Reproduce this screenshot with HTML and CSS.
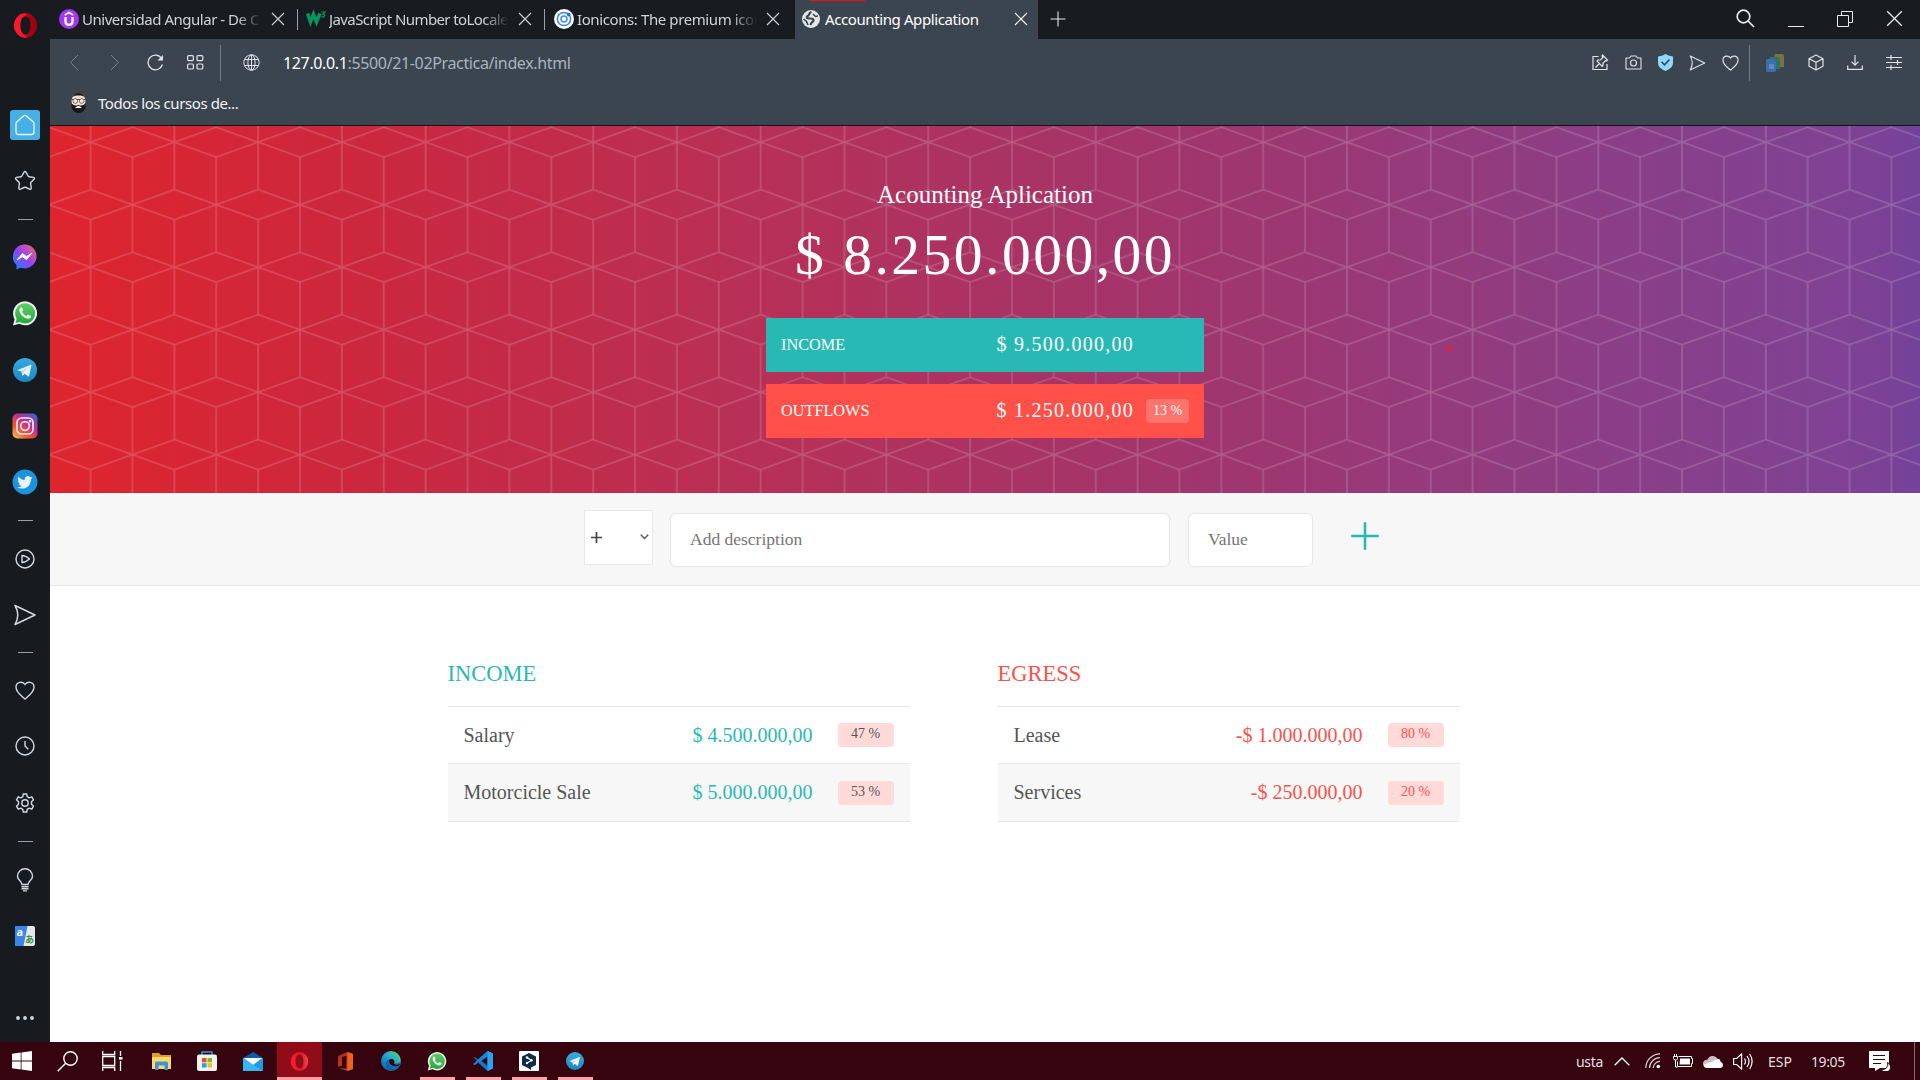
FILE: index.html
```html
<!DOCTYPE html>
<html lang="en">
<head>
<meta charset="utf-8">
<title>Accounting Application</title>
<link rel="stylesheet" href="styles.css">
</head>
<body>
<svg width="0" height="0" class="defs">
  <defs>
    <linearGradient id="gMsg" x1="0" y1="1" x2="1" y2="0"><stop offset="0" stop-color="#0a8bff"/><stop offset=".5" stop-color="#9740f5"/><stop offset="1" stop-color="#ff6a5e"/></linearGradient>
    <linearGradient id="gWa" x1="0" y1="0" x2="0" y2="1"><stop offset="0" stop-color="#5fce66"/><stop offset="1" stop-color="#25a83a"/></linearGradient>
    <linearGradient id="gTg" x1="0" y1="0" x2="0" y2="1"><stop offset="0" stop-color="#38aadf"/><stop offset="1" stop-color="#1e86c2"/></linearGradient>
    <linearGradient id="gIg" x1="0" y1="1" x2=".8" y2="0"><stop offset="0" stop-color="#fdc95c"/><stop offset=".35" stop-color="#f0562f"/><stop offset=".65" stop-color="#c32e92"/><stop offset="1" stop-color="#5059c9"/></linearGradient>
    <linearGradient id="gOp" x1="0" y1="0" x2="1" y2="0"><stop offset="0" stop-color="#ff1b2d"/><stop offset=".45" stop-color="#f5142a"/><stop offset=".6" stop-color="#b0000f"/><stop offset="1" stop-color="#9c0010"/></linearGradient>
    <linearGradient id="gOpTask" x1="0" y1="0" x2="1" y2="0"><stop offset="0" stop-color="#fb1c2e"/><stop offset=".6" stop-color="#e01828"/><stop offset="1" stop-color="#f04450"/></linearGradient>
    <linearGradient id="gEd" x1="0" y1="1" x2="1" y2="0"><stop offset="0" stop-color="#0c59a4"/><stop offset=".5" stop-color="#1ea0dc"/><stop offset="1" stop-color="#5fe05a"/></linearGradient>
    <linearGradient id="gOf" x1="0" y1="0" x2="1" y2="1"><stop offset="0" stop-color="#a32a1c"/><stop offset="1" stop-color="#d8483c"/></linearGradient>
    <symbol id="whatsapp" viewBox="0 0 26 26"><path d="M1 25.500l1.600-6.300A12 12 0 1 1 7.200 23.800z" fill="#f0f0f0"/><path d="M3.500 23l1.200-4.300A10 10 0 1 1 8 21.900z" fill="url(#gWa)"/><path d="M9.300 7.200c-.5 0-2 .8-2 2.800 0 4 5.200 8.800 8.800 8.800 2 0 3-1.400 3-2.600 0-.5-2.800-2-3.200-1.800l-1.300 1.500c-1.900-.7-3.600-2.300-4.500-4.200l1.100-1.400c.2-.4-.9-3.100-1.900-3.100z" fill="#f0f0f0"/></symbol>
    <symbol id="telegram" viewBox="0 0 24 24"><circle cx="12" cy="12" r="12" fill="url(#gTg)"/><path d="M4.800 12l12.900-5.200c.5-.1.800.1.700.8l-2.200 10.200c-.2.700-.6.800-1.200.5l-3.300-2.500-1.700 1.600c-.5.400-.7.200-.8-.3l-.7-3.600-3.600-1.100c-.3-.1-.4-.3-.1-.4z" fill="#e9f3fa"/><path d="M8.800 13.200l7-4.500-5.600 5.300-.2 3z" fill="#b6d3e6"/></symbol>
    <symbol id="opera" viewBox="0 0 26 26"><path fill-rule="evenodd" d="M13 0a12 13 0 1 0 .01 26 12 13 0 1 0-.01-26zM13 3.500c3.400 0 5.300 4.500 5.300 9.500s-1.900 9.500-5.300 9.500-5.300-4.500-5.300-9.500 1.900-9.500 5.300-9.500z"/></symbol>
    <symbol id="close" viewBox="0 0 14 14"><path d="M1 1l12 12M13 1L1 13" fill="none" stroke="currentColor" stroke-width="1.100"/></symbol>
    <symbol id="heart" viewBox="0 0 20 19"><path d="M10 3.500C8 .2 1 .2 1 6.300c0 5 5.500 8.700 9 11.700 3.500-3 9-6.700 9-11.700 0-6.100-7-6.100-9-2.800z" fill="none" stroke="currentColor" stroke-width="1.400"/></symbol>
    <symbol id="send" viewBox="0 0 22 22"><path d="M1 1.500L21 11 1 20.500C4.800 14 4.800 8 1 1.500z" fill="none" stroke="currentColor" stroke-width="1.500" stroke-linejoin="round"/></symbol>
  </defs>
</svg>

<div class="screen">
  <div class="workspace">
    <aside class="sidebar">
      <div class="slot slot-logo"><svg width="25" height="25" fill="url(#gOp)"><use href="#opera"/></svg></div>
      <div class="slot slot-home"><span class="home"><svg width="20" height="22" viewBox="0 0 20 22"><path d="M1 9.500Q1 8.500 2 7.700L8.500 2q1.500-1.200 3 0L18 7.700q1 .8 1 1.800V18q0 2.500-2.500 2.500h-13Q1 20.500 1 18z" fill="none" stroke="#eef8ff" stroke-width="1.300"/></svg></span></div>
      <div class="slot"><svg width="22" height="22" viewBox="0 0 22 22"><path d="M9.900 2.300q1.100-1.600 2.200 0l2 3.700q.3.600 1 .7l4.300.7q1.800.5.600 1.900l-3 3q-.5.500-.4 1.200l.6 4.500q0 1.900-1.700 1.200L12 17.500q-1-.4-2 0l-3.500 1.700q-1.700.7-1.700-1.200l.6-4.500q.1-.7-.4-1.200l-3-3Q.8 7.900 2.600 7.400l4.300-.7q.7-.1 1-.7z" fill="none" stroke="currentColor" stroke-width="1.400"/></svg></div>
      <div class="rule rule-a"></div>
      <div class="slot"><svg width="25" height="26" viewBox="0 0 25 26"><path d="M12.500.5a12 12 0 1 1-4 23.300L4.500 25.500V21A12 12 0 0 1 12.500.5z" fill="url(#gMsg)"/><path d="M5 16l5.500-6.500 4 3L20 9l-5.500 6.700-4-3z" fill="#fff" stroke="#fff" stroke-width=".8"/></svg></div>
      <div class="slot"><svg width="26" height="26"><use href="#whatsapp"/></svg></div>
      <div class="slot"><svg width="24" height="24"><use href="#telegram"/></svg></div>
      <div class="slot"><svg width="26" height="26" viewBox="0 0 26 26"><rect x=".5" y=".5" width="25" height="25" rx="5" fill="url(#gIg)"/><rect x="5" y="5" width="16" height="16" rx="4.500" fill="none" stroke="#f5e9ee" stroke-width="1.700"/><circle cx="13" cy="13" r="4.300" fill="none" stroke="#f5e9ee" stroke-width="1.700"/><circle cx="18" cy="8.300" r="1.200" fill="#fff"/></svg></div>
      <div class="slot"><svg width="26" height="26" viewBox="0 0 26 26"><circle cx="13" cy="13" r="12.500" fill="#1b93dd"/><path d="M20.500 8.600c-.6.300-1.200.4-1.800.5.700-.4 1.100-1 1.400-1.700-.6.400-1.300.6-2 .8a3.150 3.150 0 0 0-5.400 2.900c-2.600-.1-4.900-1.400-6.500-3.300-.8 1.500-.4 3.200 1 4.200-.5 0-1-.2-1.400-.4 0 1.500 1.100 2.800 2.500 3.100-.5.100-1 .1-1.400 0 .4 1.300 1.500 2.200 2.900 2.200A6.300 6.300 0 0 1 5.200 18.200c5.600 3.400 13.700.7 13.700-8 .6-.4 1.200-1 1.600-1.600z" fill="#e9f2f8"/></svg></div>
      <div class="rule rule-b"></div>
      <div class="slot"><svg width="20" height="20" viewBox="0 0 20 20" fill="none" stroke="currentColor" stroke-width="1.400"><circle cx="10" cy="10" r="9"/><path d="M7 6.500v7q3.500 0 7.500-3.500Q10.500 6.500 7 6.500z" stroke-linejoin="round"/></svg></div>
      <div class="slot"><svg width="22" height="22"><use href="#send"/></svg></div>
      <div class="rule rule-c"></div>
      <div class="slot"><svg width="20" height="19"><use href="#heart"/></svg></div>
      <div class="slot"><svg width="20" height="20" viewBox="0 0 20 20" fill="none" stroke="currentColor" stroke-width="1.400"><circle cx="10" cy="10" r="9"/><path d="M10 5v5l3.200 3.300"/></svg></div>
      <div class="slot"><svg width="20" height="20" viewBox="0 0 20 20" fill="none" stroke="currentColor" stroke-width="1.400" stroke-linejoin="round"><path d="M8.300 1h3.400l.5 2.700 2 1.100 2.600-1 1.700 3L16.500 8.700v2.600l2 1.900-1.700 3-2.600-1-2 1.100-.5 2.700H8.300l-.5-2.700-2-1.100-2.600 1-1.700-3 2-1.900V8.700l-2-1.900 1.700-3 2.600 1 2-1.100z"/><circle cx="10" cy="10" r="3.200"/></svg></div>
      <div class="rule rule-d"></div>
      <div class="slot"><svg width="18" height="24" viewBox="0 0 18 24" fill="none" stroke="currentColor" stroke-width="1.400"><path d="M6 16.500C6 13 1.500 12.500 1.500 8.300a7.500 7.500 0 0 1 15 0C16.500 12.500 12 13 12 16.500zM5.500 18.700h7M5.500 20.800h7M7 22.900h4"/></svg></div>
      <div class="slot"><svg class="translate" width="20" height="20" viewBox="0 0 20 20"><rect width="20" height="20" rx="2" fill="#e6e7e9"/><path d="M2 0h10.500L8.500 20H2q-2 0-2-2V2Q0 0 2 0z" fill="#3985ea"/><text x="1.500" y="10" class="glyph-a">a</text><text x="10" y="17" class="glyph-ja">あ</text></svg></div>
      <div class="slot slot-more"><svg width="18" height="4" viewBox="0 0 18 4" fill="currentColor"><circle cx="2" cy="2" r="1.900"/><circle cx="9" cy="2" r="1.900"/><circle cx="16" cy="2" r="1.900"/></svg></div>
    </aside>

    <div class="browser">
      <div class="tabs">
        <div class="tab tab-1">
          <svg width="20" height="20" viewBox="0 0 20 20"><circle cx="10" cy="10" r="10" fill="#a435f0"/><path d="M6.500 8v4.500q0 3.300 3.500 3.300t3.500-3.300V8" fill="none" stroke="#fff" stroke-width="2.300"/><path d="M5.700 6L10 3.500 14.300 6" fill="none" stroke="#fff" stroke-width="1.700"/></svg>
          <span class="tab-text t1">Universidad Angular - De C</span>
          <svg class="tab-close" width="14" height="14"><use href="#close"/></svg>
        </div>
        <div class="tab tab-2">
          <svg width="20" height="20" viewBox="0 0 20 20"><path d="M1.500 4.500L4.500 13 7.500 5l3 8L14 4.500" fill="none" stroke="#059862" stroke-width="3.400"/><path d="M15.500 3h3.500l-2 2.200c3.300.2 1.800 4-1.700 2.300" fill="none" stroke="#059862" stroke-width="1.200"/></svg>
          <span class="tab-text t2">JavaScript Number toLocale</span>
          <svg class="tab-close" width="14" height="14"><use href="#close"/></svg>
        </div>
        <div class="tab tab-3">
          <svg width="20" height="20" viewBox="0 0 20 20"><circle cx="10" cy="10" r="10" fill="#fff"/><circle cx="10" cy="10" r="6.600" fill="none" stroke="#3880ff" stroke-width="1.500"/><circle cx="10" cy="10" r="3" fill="none" stroke="#3f8bff" stroke-width="1.500"/><circle cx="14.700" cy="5.600" r="1.800" fill="#2663e8"/></svg>
          <span class="tab-text t3">Ionicons: The premium icon</span>
          <svg class="tab-close" width="14" height="14"><use href="#close"/></svg>
        </div>
        <div class="tab tab-active">
          <svg width="18" height="18" viewBox="0 0 18 18"><circle cx="9" cy="9" r="9" fill="#e3e7ea"/><path d="M9.500 2C6 3 8.500 5 5 6.500c-1 2 2 2 3.500 2s3 .5 3 2-2.500 1.500-3 4.500" fill="none" stroke="#3a4550" stroke-width="2.200"/><path d="M11 4l2.500 2.500 2.500-.5M1.500 9l3 2.500L6 15" fill="none" stroke="#3a4550" stroke-width="1.600"/></svg>
          <span class="tab-text t4">Accounting Application</span>
          <svg class="tab-close" width="14" height="14"><use href="#close"/></svg>
        </div>
        <svg class="new-tab" width="16" height="16" viewBox="0 0 16 16"><path d="M8 .5v15M.5 8h15" stroke="#e8eaec" stroke-width="1.100"/></svg>
        <div class="window-tools">
          <svg width="19" height="19" viewBox="0 0 19 19" fill="none" stroke="currentColor" stroke-width="1.700"><circle cx="7.500" cy="7.500" r="6.300"/><path d="M12 12l6 6"/></svg>
          <svg width="16" height="16" viewBox="0 0 16 16"><path d="M0 15.500h16" stroke="currentColor"/></svg>
          <svg width="16" height="16" viewBox="0 0 16 16" fill="none" stroke="currentColor"><path d="M.5 4.500h11v11H.5zM4.500 4.500v-4h11v11h-4"/></svg>
          <svg width="17" height="17"><use href="#close"/></svg>
        </div>
      </div>

      <div class="toolbar">
        <svg class="dim" width="10" height="17" viewBox="0 0 10 17"><path d="M9 1L1.500 8.500 9 16" fill="none" stroke="currentColor"/></svg>
        <svg class="dim fwd" width="10" height="17" viewBox="0 0 10 17"><path d="M1 1l7.500 7.500L1 16" fill="none" stroke="currentColor"/></svg>
        <svg class="reload" width="17" height="17" viewBox="0 0 17 17"><path d="M15.400 10.500A7.300 7.300 0 1 1 14.500 4.500" fill="none" stroke="currentColor" stroke-width="1.300"/><path d="M16 1v5.500h-5.500z" fill="currentColor"/></svg>
        <svg class="speed" width="17" height="15" viewBox="0 0 17 15" fill="none" stroke="currentColor" stroke-width="1.200"><rect x=".6" y=".6" width="5.800" height="5" rx="1"/><rect x="10" y=".6" width="5.800" height="5" rx="1"/><rect x=".6" y="9" width="5.800" height="5" rx="1"/><rect x="10" y="9" width="5.800" height="5" rx="1"/></svg>
        <span class="divider"></span>
        <svg class="globe" width="17" height="17" viewBox="0 0 17 17" fill="none" stroke="currentColor"><circle cx="8.500" cy="8.500" r="7.700"/><ellipse cx="8.500" cy="8.500" rx="3.600" ry="7.700"/><path d="M1.500 5.500h14M1.500 11.500h14M8.500 1v15"/></svg>
        <span class="url"><b>127.0.0.1</b>:5500/21-02Practica/index.html</span>
        <div class="actions">
          <svg width="17" height="17" viewBox="0 0 17 17" fill="none" stroke="currentColor" stroke-width="1.200"><path d="M6.500 2.500H1v13h14V10M3.500 13.500l4-4M10.500 1l5 5-1 1-1-.3L11 9v2.500l-.8.800L5 7l1-1h2.500L11 3.500l-1-1.300z"/></svg>
          <svg width="17" height="15" viewBox="0 0 17 15" fill="none" stroke="currentColor" stroke-width="1.100"><path d="M1 3h3.500L6 1h5l1.500 2H16v11H1z" stroke-linejoin="round"/><circle cx="8.500" cy="8" r="3"/></svg>
          <svg width="15" height="17" viewBox="0 0 15 17"><path d="M7.500 0Q11 2.300 15 2.500v6c0 4.500-3 6.500-7.500 8.500C3 15 0 13 0 8.500v-6Q4 2.300 7.500 0z" fill="#8fd8fd"/><path d="M3.500 7.800l3 3L11.500 5.500" fill="none" stroke="#2f4554" stroke-width="1.600"/></svg>
          <svg width="17" height="16"><use href="#send"/></svg>
          <svg width="17" height="16"><use href="#heart"/></svg>
          <span class="divider"></span>
          <svg width="19" height="18" viewBox="0 0 19 18"><path d="M9 0h7q2 0 2 2v11h-5V5H8z" fill="#7d7041"/><path d="M4 3h7q3 0 3 3v9H9V8H4z" fill="#2b7660"/><rect y="5" width="10" height="13" rx="1.500" fill="#3f6cab"/><rect x="3" y="10" width="5" height="5" fill="#5b8cc9"/></svg>
          <svg width="16" height="17" viewBox="0 0 16 17" fill="none" stroke="currentColor" stroke-width="1.200"><path d="M8 1l7 3.700v7.600L8 16l-7-3.700V4.700zM1 4.700l7 3.600 7-3.600M8 8.300V16" stroke-linejoin="round"/></svg>
          <svg width="16" height="15" viewBox="0 0 16 15" fill="none" stroke="currentColor" stroke-width="1.200"><path d="M.7 10.500v3.800h14.600v-3.800M8 0v10M4.500 6.700L8 10.200l3.500-3.500"/></svg>
          <svg width="17" height="15" viewBox="0 0 17 15" fill="none" stroke="currentColor" stroke-width="1.200"><path d="M0 2.500h16M0 7.500h16M0 12.500h16M5 0v5M11.500 5v5M5 10v5"/></svg>
        </div>
      </div>
      <div class="bookmarks">
        <svg width="17" height="20" viewBox="0 0 17 20"><path d="M2 12q0 8 6.500 8t6.500-8z" fill="#141414"/><ellipse cx="8.500" cy="8" rx="7" ry="7.500" fill="#f3dccb"/><path d="M3 3.500Q5 0 8.500 0T14 3.500L11 2.500H6z" fill="#191919"/><path d="M1 6.500h15" stroke="#50545c"/><circle cx="5.300" cy="8" r="2.300" fill="#f7ece4" stroke="#444" stroke-width=".7"/><circle cx="11.700" cy="8" r="2.300" fill="#f7ece4" stroke="#444" stroke-width=".7"/><path d="M1.500 10.500q3 3 7 1.500 4 1.500 7-1.500v4.500q-3 4-7 4t-7-4z" fill="#191919"/><path d="M5 15q3.500-4 7 0z" fill="#fff"/></svg>
        <span>Todos los cursos de...</span>
      </div>

      <main class="page">
        <section class="hero">
          <svg class="hero-pattern" width="1870" height="367">
            <defs>
              <pattern id="cubes" width="83.760" height="125" patternUnits="userSpaceOnUse" patternTransform="translate(40.600 16.200)">
                <path d="M0 0V47.500M0 77.500V125M83.760 0V47.500M83.760 77.500V125M41.880 15V110M0 0L41.880 15 83.760 0M0 125L41.880 110 83.760 125M0 47.500L41.880 62.500 0 77.500M83.760 47.500L41.880 62.500 83.760 77.500" fill="none" stroke="#fff" stroke-width="1.500" stroke-opacity=".18"/>
              </pattern>
            </defs>
            <rect width="1870" height="367" fill="url(#cubes)"/>
            <circle cx="1399" cy="222.500" r="2.500" fill="#e91f26"/>
          </svg>
          <div class="budget">
            <h1 class="budget-title">Acounting Aplication</h1>
            <div class="budget-value">$ 8.250.000,00</div>
            <div class="total total-income"><span class="total-label">INCOME</span><span class="total-value">$ 9.500.000,00</span><span class="total-pct"></span></div>
            <div class="total total-out"><span class="total-label">OUTFLOWS</span><span class="total-value">$ 1.250.000,00</span><span class="total-pct filled">13 %</span></div>
          </div>
        </section>

        <form class="entry">
          <div class="kind"><svg width="11" height="11" viewBox="0 0 11 11"><path d="M5.500 0v11M0 5.500h11" stroke="#444" stroke-width="1.700"/></svg><svg width="9" height="6" viewBox="0 0 9 6"><path d="M.8.800L4.500 4.500 8.200.8" fill="none" stroke="#555" stroke-width="1.400"/></svg></div>
          <input class="field field-desc" type="text" placeholder="Add description">
          <input class="field field-value" type="text" placeholder="Value">
          <svg class="add" width="28" height="28" viewBox="0 0 28 28"><path d="M14 1.300v25.400M1.300 14h25.400" stroke="#28b9b5" stroke-width="2.600" stroke-linecap="round"/></svg>
        </form>

        <div class="lists">
          <section class="list income">
            <h2>INCOME</h2>
            <div class="row"><span class="name">Salary</span><span class="amount">$ 4.500.000,00</span><span class="pct">47 %</span></div>
            <div class="row"><span class="name">Motorcicle Sale</span><span class="amount">$ 5.000.000,00</span><span class="pct">53 %</span></div>
          </section>
          <section class="list egress">
            <h2>EGRESS</h2>
            <div class="row"><span class="name">Lease</span><span class="amount">-$ 1.000.000,00</span><span class="pct">80 %</span></div>
            <div class="row"><span class="name">Services</span><span class="amount">-$ 250.000,00</span><span class="pct">20 %</span></div>
          </section>
        </div>
      </main>
    </div>
  </div>

  <footer class="taskbar">
    <div class="task sys"><svg width="20" height="20" viewBox="0 0 20 20"><path d="M0 2.800l8.700-1.200v8H0zM9.500 1.500L20 0v9.600H9.500zM0 10.400h8.700v8L0 17.200zM9.500 10.400H20V20L9.500 18.500z" fill="#fff"/></svg></div>
    <div class="task sys"><svg width="21" height="21" viewBox="0 0 21 21" fill="none" stroke="#fff" stroke-width="1.400"><circle cx="13.500" cy="7.500" r="6.700"/><path d="M8.700 12.300L.7 20.300"/></svg></div>
    <div class="task sys"><svg width="21" height="20" viewBox="0 0 21 20" fill="none" stroke="#fff" stroke-width="1.300"><path d="M.7 0v3.500h12V0M.7 20v-3.500h12V20M.7 5.500h12v9H.7zM18.500 0v5M18.500 10v10"/><path d="M17 7.300h3.500" stroke-width="2.600"/></svg></div>
    <div class="task first"><svg width="19" height="17" viewBox="0 0 19 17"><path d="M0 0h7l2 2h10v3H0z" fill="#d9a028"/><path d="M0 4h19v12H0z" fill="#ffd867"/><path d="M3 17v-7q0-1.500 1.500-1.500h10Q16 8.500 16 10v7h-3.500v-4.500h-6V17z" fill="#3f93d8"/></svg></div>
    <div class="task"><svg width="20" height="20" viewBox="0 0 20 20"><path d="M5 5V1h10v4" fill="none" stroke="#20a4df" stroke-width="1.500"/><rect y="3.500" width="20" height="16.500" rx="2" fill="#f3f3f3"/><path d="M5 7h4.500v4.300H5z" fill="#f04e24"/><path d="M10.500 7H15v4.300h-4.500z" fill="#7fba1c"/><path d="M5 12.200h4.500v4.300H5z" fill="#18a2eb"/><path d="M10.500 12.200H15v4.300h-4.500z" fill="#fdb813"/></svg></div>
    <div class="task"><svg width="20" height="19" viewBox="0 0 20 19"><path d="M0 6L10 0l10 6z" fill="#0f5ba8"/><path d="M0 6h20v13H0z" fill="#1d9be4"/><path d="M1 6h18l-9 7z" fill="#f4f4f4"/><path d="M0 6l20 13H0z" fill="#35b7f1"/><path d="M1 6h18l-9 6.500z" fill="#fff"/></svg></div>
    <div class="task current"><svg width="19" height="19" fill="url(#gOpTask)"><use href="#opera"/></svg></div>
    <div class="task"><svg width="15" height="19" viewBox="0 0 15 19"><path d="M9.500 0L15 2v15l-5.500 2L1 15.700l7.500 1V3.800L4 5v8.500L0 15V4z" fill="url(#gOf)"/><path d="M9.500 0L15 2v15l-5.500 2z" fill="#eb641d"/></svg></div>
    <div class="task"><svg width="20" height="20" viewBox="0 0 20 20"><circle cx="10" cy="10" r="10" fill="url(#gEd)"/><path d="M8 9.500c0 7 6 7.500 10.500 5.500C15 21.500 5.500 21 4.500 14c-.3-4 3-6 6-6 2.500 0 4 1.500 3 4 3 .8 6.500 0 6.500-4v4.500q-5 3-9-.5c0-1-1-2.500-3-2.500z" fill="#0d4f99" opacity=".6"/><path d="M8 9.500q2-2.500 4.500-.5c1.500 1.800.3 2.600.3 3.500 0 1.300 3.500 1.800 6.400.2L18 15c-5 1.500-10-.5-10-5.500z" fill="#35040f"/></svg></div>
    <div class="task open"><svg width="20" height="20"><use href="#whatsapp"/></svg></div>
    <div class="task open"><svg width="20" height="20" viewBox="0 0 20 20"><path d="M14.500 0L20 2.500v15L14.500 20 5 11.500 1.800 14 0 13V7l1.800-1L5 8.500z" fill="#0f7ac6"/><path d="M14.500 5.500v9L8.500 10z" fill="#35040f"/><path d="M0 5.800v8l4.200-3.800z" fill="#35040f"/><path d="M0 13L14.500 0 20 2.500 14.500 5 1.800 14z" fill="#1f88d4" opacity=".8"/><path d="M14.500 0L20 2.500v15L14.500 20z" fill="#2ba2f3"/></svg></div>
    <div class="task open"><svg width="20" height="20" viewBox="0 0 20 20"><rect width="20" height="20" rx="1" fill="#fff"/><path d="M10 2l7 3.500v8.500l-5 2.500V19l-3-2-6-3V5.500z" fill="#0f2b46"/><path d="M8 6.500l4.500 3L8 12" fill="none" stroke="#fff" stroke-width="1.200"/><circle cx="8" cy="6.500" r="1.200" fill="#fff"/><circle cx="12.500" cy="9.300" r="1.200" fill="#fff"/><circle cx="8" cy="12" r="1.200" fill="#fff"/></svg></div>
    <div class="task open"><svg width="18" height="18"><use href="#telegram"/></svg></div>

    <div class="tray">
      <span class="usta">usta</span>
      <svg class="chev" width="16" height="9" viewBox="0 0 16 9"><path d="M.7 8.300L8 1l7.300 7.300" fill="none" stroke="#fff" stroke-width="1.300"/></svg>
      <svg class="wifi" width="16" height="16" viewBox="0 0 16 16" fill="none" stroke="#d8cdd0" stroke-width="1.200"><path d="M.8 15A14.500 14.500 0 0 1 15 .8M4.500 15A10.500 10.500 0 0 1 15 4.700M8.200 15A6.800 6.800 0 0 1 15 8.400"/><circle cx="13.300" cy="13.500" r="1.800" fill="#fff" stroke="none"/></svg>
      <svg class="bat" width="20" height="14" viewBox="0 0 20 14"><path d="M5.500 2.500h13v2h1v5h-1v3H4.500v-5" fill="none" stroke="#fff"/><path d="M7 4.500h10v6H6.500z" fill="#fff"/><path d="M.5 2.500h4v2q0 1.500-2 1.500t-2-1.500zM1.500 2.500V0M3.500 2.500V0M2.500 6v7h2" fill="none" stroke="#fff"/></svg>
      <svg class="cloud" width="20" height="13" viewBox="0 0 20 13"><path d="M4.500 4.500A5.500 5.500 0 0 1 14.500 4L8 12H3Q0 12 0 8.500t4.500-4z" fill="#cdc0c3"/><path d="M3 13q-2.500-1-2-3.500L10 6l4.500-2.200q3 .2 3 3 2.500.7 2.500 3.200T17 13z" fill="#fff"/></svg>
      <svg class="vol" width="20" height="17" viewBox="0 0 20 17" fill="none" stroke="#fff" stroke-width="1.200"><path d="M.6 5.500h3l5-4.500v15l-5-4.500h-3zM11.500 5.500q2 3 0 6M14 3q4 5.500 0 11M16.700 1q4.800 7.500 0 15"/></svg>
      <span class="lang">ESP</span>
      <span class="time">19:05</span>
      <svg class="note" width="21" height="20" viewBox="0 0 21 20"><path d="M0 0h20v17h-9l-5 3v-3H0z" fill="#fff"/><path d="M4 4.500h12M4 8.500h12M4 12.500h8" stroke="#35040f" stroke-width="1.200"/><path d="M18.500 11.500a5 5 0 1 1-6.500 6.500 5 5 0 0 0 6.500-6.500z" fill="#fff" stroke="#35040f"/></svg>
      <span class="peek"></span>
    </div>
  </footer>
</div>
</body>
</html>
```
FILE: styles.css
```css
* { box-sizing: border-box; }
html, body { margin: 0; padding: 0; overflow: hidden; }
body { width: 1920px; height: 1080px; background: #fff; font-family: "Liberation Serif", "Times New Roman", serif; }
svg { display: block; flex: none; }
.defs { position: absolute; }
.screen { display: flex; flex-direction: column; width: 1920px; height: 1080px; }
.workspace { display: flex; height: 1042px; }

/* Side panel */
.sidebar { display: flex; flex-direction: column; width: 50px; height: 1042px; padding-right: 1px; background: #171b1f; color: #d3d9de; }
.slot { display: flex; align-items: center; justify-content: center; height: 56.300px; flex: none; }
.slot-logo { height: 51px; padding-left: 2px; }
.slot-home { margin-top: 46px; padding-left: 1px; }
.home { display: flex; align-items: center; justify-content: center; width: 30px; height: 30px; border-radius: 3px; background: #46afe6; }
.rule { display: flex; align-items: center; justify-content: center; flex: none; padding-left: 2px; }
.rule::before { content: ""; width: 15px; height: 1px; background: #93a2ac; }
.rule-a { height: 19.400px; }
.rule-b { height: 20.500px; }
.rule-c { height: 18.400px; }
.rule-d { height: 21.100px; }
.slot-more { margin-top: auto; height: 48px; }
.translate { overflow: visible; }
.glyph-a { font: bold 11px "Noto Sans", sans-serif; fill: #fff; }
.glyph-ja { font: bold 9px "Noto Sans CJK JP", sans-serif; fill: #3b9440; }

/* Browser chrome */
.browser { display: flex; flex-direction: column; width: 1870px; background: #3a4550; font-family: "Noto Sans", sans-serif; }
.tabs { display: flex; height: 39px; background: #181b1f; color: #d0d4d8; font-size: 15px; flex: none; }
.tab { display: flex; align-items: center; height: 39px; padding-bottom: 2px; }
.tab-text { white-space: nowrap; line-height: 22px; width: 180px; flex: none; margin-left: 3px; letter-spacing: -.4px; -webkit-mask-image: linear-gradient(90deg, #000 86%, transparent); mask-image: linear-gradient(90deg, #000 86%, transparent); }
.t1 { letter-spacing: -.48px; }
.t2 { letter-spacing: -.6px; }
.tab-close { margin-left: 9px; }
.tab-1 { width: 247px; padding-left: 9px; }
.tab-2, .tab-3 { width: 247px; padding-left: 9px; background: linear-gradient(#9aa1a8, #9aa1a8) 0 9px / 1px 21px no-repeat; }
.tab-3 { width: 251px; padding-left: 10px; }
.tab-active { width: 243px; padding-left: 7px; background: linear-gradient(#e81123, #e81123) 14px 0 / 56px 1px no-repeat, #3a4550; color: #fff; }
.tab-active .tab-text { -webkit-mask-image: none; mask-image: none; margin-left: 5px; }
.new-tab { margin: 11px 0 0 12px; }
.window-tools { display: flex; gap: 33px; margin: 9px 17px 0 auto; color: #e8eaec; align-items: center; height: 19px; }
.toolbar { display: flex; align-items: center; height: 47px; padding-left: 19px; color: #dfe4e8; flex: none; }
.dim { color: #74808a; }
.fwd { margin-left: 31px; }
.reload { margin-left: 27px; }
.speed { margin-left: 23px; }
.divider { width: 1px; height: 36px; background: #6f7a84; flex: none; }
.toolbar > .divider { margin-left: 16px; }
.globe { margin-left: 22px; }
.url { margin-left: 23px; font-size: 16px; letter-spacing: -.36px; color: #a9b4be; white-space: nowrap; }
.url b { font-weight: 400; color: #fff; }
.actions { display: flex; align-items: center; gap: 16px; margin-left: auto; padding-right: 17px; }
.actions .divider { margin: 0 0 0 -6px; }
.actions .divider ~ svg + svg { margin-left: 7px; }
.bookmarks { display: flex; align-items: center; gap: 11px; height: 40px; padding: 0 0 5px 20px; border-bottom: 1px solid #111418; color: #f0f2f4; font-size: 15px; letter-spacing: -.42px; flex: none; }

/* Application page */
.page { flex: 1; background: #fff; font-family: "Liberation Serif", "Times New Roman", serif; color: #555; }
.hero { position: relative; height: 367px; background: linear-gradient(90deg, #de252d 0, #ca2840 18%, #b83056 37%, #aa3363 50%, #9f366f 63%, #963a7b 73%, #8b3e86 83%, #7f4294 96%, #75429a 100%); }
.hero-pattern { position: absolute; left: 0; top: 0; }
.budget { position: relative; width: 438px; margin: 0 auto; padding-top: 55px; color: #fff; }
.budget-title { margin: 0; font-size: 25px; font-weight: 400; line-height: 28px; text-align: center; }
.budget-value { margin-top: 12px; font-size: 57.500px; line-height: 68px; letter-spacing: 2.500px; text-align: center; white-space: nowrap; }
.total { display: flex; align-items: center; height: 54px; padding: 0 15px; }
.total-income { margin-top: 29px; background: #28b9b5; }
.total-out { margin-top: 12px; background: #ff5049; }
.total-label { font-size: 16.250px; }
.total-value { margin-left: auto; padding-bottom: 1px; font-size: 20px; letter-spacing: 1.250px; }
.total-pct { width: 43px; height: 24px; margin-left: 12px; border-radius: 4px; font-size: 14px; line-height: 23px; text-align: center; }
.filled { background: rgba(255, 255, 255, .2); }

.entry { display: flex; align-items: flex-start; height: 93px; padding: 17px 0 0 534px; background: #f7f7f7; border-bottom: 1px solid #e7e7e7; }
.kind { display: flex; align-items: center; justify-content: space-between; width: 69px; height: 55px; padding: 0 3px 1px 6px; background: #fff; border: 1px solid #e7e7e7; }
.field { height: 54px; margin-top: 3px; padding: 0 19px 2px; border: 1px solid #e7e7e7; border-radius: 6px; background: #fff; font: 17.500px "Liberation Serif", serif; outline: none; }
.field::placeholder { color: #757575; }
.field-desc { width: 500px; margin-left: 17px; }
.field-value { width: 125px; margin-left: 18px; }
.add { margin: 12px 0 0 38px; }

.lists { display: flex; gap: 88px; padding: 72px 0 0 397.500px; }
.list { width: 462px; }
.list h2 { margin: 0; height: 48px; font-size: 22.500px; font-weight: 400; line-height: 32px; }
.income h2, .income .amount { color: #28b9b5; }
.egress h2, .egress .amount, .egress .pct { color: #ff5049; }
.row { display: flex; align-items: center; height: 58px; padding: 0 16px; border-bottom: 1px solid #e7e7e7; font-size: 20px; }
.list h2 + .row { border-top: 1px solid #e7e7e7; }
.row:nth-child(odd) { background: #f7f7f7; }
.name { color: #555; }
.amount { margin-left: auto; }
.pct { width: 56px; height: 24px; margin-left: 25px; border-radius: 4px; background: #ffdad9; font-size: 14px; line-height: 22px; text-align: center; }

/* Taskbar */
.taskbar { display: flex; height: 38px; background: #35040f; color: #e8dfe1; font-family: "Noto Sans", sans-serif; font-size: 14px; }
.task { display: flex; align-items: center; justify-content: center; width: 46px; height: 38px; flex: none; }
.sys { width: 45px; padding-right: 1px; }
.first { margin-left: 3px; }
.current { background: linear-gradient(#ffa3a9, #ffa3a9) 1px 35px / 45px 3px no-repeat, linear-gradient(#900c18, #900c18) 1px 0 / 45px 38px no-repeat; }
.open { background: linear-gradient(#ffa3a9, #ffa3a9) 6px 35px / 35px 3px no-repeat; }
.tray { display: flex; align-items: center; margin-left: auto; }
.usta { width: 26px; letter-spacing: -.3px; }
.chev { margin-left: 12px; }
.wifi { margin-left: 15px; }
.bat { margin-left: 12px; }
.cloud { margin-left: 10px; }
.vol { margin-left: 10px; }
.lang { width: 24px; margin-left: 15px; }
.time { width: 34px; margin-left: 19px; letter-spacing: -.4px; }
.note { margin-left: 24px; }
.peek { width: 1px; height: 38px; margin: 0 5px 0 24px; background: #86686f; }
```
